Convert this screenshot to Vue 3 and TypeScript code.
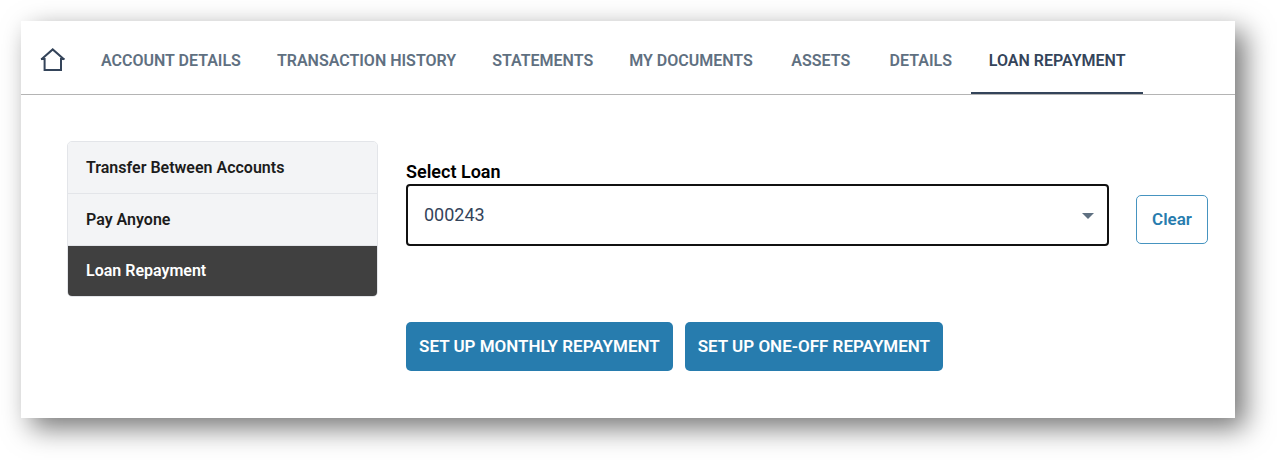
<script setup lang="ts">
import { ref } from 'vue'

const tabs = ['Account Details', 'Transaction History', 'Statements', 'My Documents', 'Assets', 'Details', 'Loan Repayment']
const activeTab = ref('Loan Repayment')

const actions = ['Transfer Between Accounts', 'Pay Anyone', 'Loan Repayment']
const activeAction = ref('Loan Repayment')

const loans = ['000243']
const loan = ref('000243')
</script>

<template>
  <main class="card">
    <nav class="tabs" aria-label="Account sections">
      <a class="home" href="#" aria-label="Home">
        <svg width="26" height="24" viewBox="0 0 26 24" fill="none" stroke="#34445a" stroke-width="2">
          <path d="M1.2 11.4 12.7 1.4 24.2 11.4" />
          <path d="M1 10.9H4.6V21.9H21V10.9H24.4" />
        </svg>
      </a>
      <a
        v-for="tab in tabs"
        :key="tab"
        href="#"
        class="tab"
        :class="{ active: tab === activeTab }"
        @click.prevent="activeTab = tab"
      >{{ tab }}</a>
    </nav>

    <div class="body">
      <nav class="side" aria-label="Payments">
        <a
          v-for="action in actions"
          :key="action"
          href="#"
          class="side-item"
          :class="{ active: action === activeAction }"
          @click.prevent="activeAction = action"
        >{{ action }}</a>
      </nav>

      <form class="form" @submit.prevent>
        <div class="row">
          <div class="field">
            <label for="loan">Select Loan</label>
            <div class="select-box">
              <select id="loan" v-model="loan">
                <option v-for="l in loans" :key="l" :value="l">{{ l }}</option>
              </select>
              <svg class="arrow" width="12" height="6" viewBox="0 0 12 6"><path d="M0 0H12L6 6Z" fill="#5f7081" /></svg>
            </div>
          </div>
          <button type="button" class="clear" @click="loan = ''">Clear</button>
        </div>
        <div class="buttons">
          <button type="button" class="primary">Set up monthly repayment</button>
          <button type="button" class="primary">Set up one-off repayment</button>
        </div>
      </form>
    </div>
  </main>
</template>

<style>
body {
  background: #fff;
}
</style>

<style scoped>
.card {
  margin: 21px 42px 42px 21px;
  background: #fff;
  box-shadow: 10px 10px 26px rgba(0, 0, 0, 0.54);
  font-family: Roboto, "Liberation Sans", sans-serif;
  font-size: 16px;
  line-height: 24px;
}

.tabs {
  display: flex;
  height: 73px;
  border-bottom: 1px solid #b4b4b4;
}

.home {
  display: flex;
  align-items: center;
  box-sizing: border-box;
  width: 62px;
  padding: 4px 0 0 19px;
}

.tab {
  display: flex;
  align-items: center;
  justify-content: center;
  box-sizing: border-box;
  min-width: 100px;
  padding: 8px 18px 0;
  border-bottom: 2px solid transparent;
  color: #5f7081;
  font-weight: 600;
  text-decoration: none;
  text-transform: uppercase;
  white-space: nowrap;
}

.tab.active {
  border-bottom-color: #34445a;
  color: #34445a;
}

.body {
  display: flex;
  align-items: flex-start;
  gap: 28px;
  padding: 46px 27px 47px 46px;
}

.side {
  flex: none;
  box-sizing: border-box;
  width: 311px;
  overflow: hidden;
  border: 1px solid #e3e5e9;
  border-radius: 5px;
}

.side-item {
  display: block;
  padding: 14px 18px 13px;
  border-bottom: 1px solid #e3e5e9;
  background: #f3f4f6;
  color: #1c1c1c;
  font-weight: 600;
  text-decoration: none;
}

.side-item:last-child {
  padding: 13px 18px;
  border-bottom: 0;
}

.side-item.active {
  background: #404040;
  color: #fff;
}

.form {
  flex: 1;
  padding-top: 19px;
}

.row {
  display: flex;
  align-items: flex-end;
  gap: 27px;
}

.field {
  flex: 1;
}

label {
  display: block;
  color: #000;
  font-size: 18px;
  font-weight: 600;
}

.select-box {
  position: relative;
}

select {
  display: block;
  box-sizing: border-box;
  width: 100%;
  height: 62px;
  padding: 0 44px 2px 16px;
  border: 2px solid #111;
  border-radius: 4px;
  outline: 0;
  appearance: none;
  background: #fff;
  color: #34445a;
  font: 18px Roboto, "Liberation Sans", sans-serif;
}

.arrow {
  position: absolute;
  top: 29px;
  right: 15px;
  pointer-events: none;
}

button {
  height: 49px;
  border-radius: 5px;
  font: 600 17px Roboto, "Liberation Sans", sans-serif;
}

.clear {
  margin-bottom: 2px;
  padding: 0 15px 2px;
  border: 1px solid #4694c0;
  background: #fff;
  color: #277cae;
}

.buttons {
  display: flex;
  gap: 12px;
  margin-top: 76px;
}

.primary {
  padding: 0 13px 2px;
  border: 0;
  background: #277cae;
  color: #fff;
  text-transform: uppercase;
}
</style>
